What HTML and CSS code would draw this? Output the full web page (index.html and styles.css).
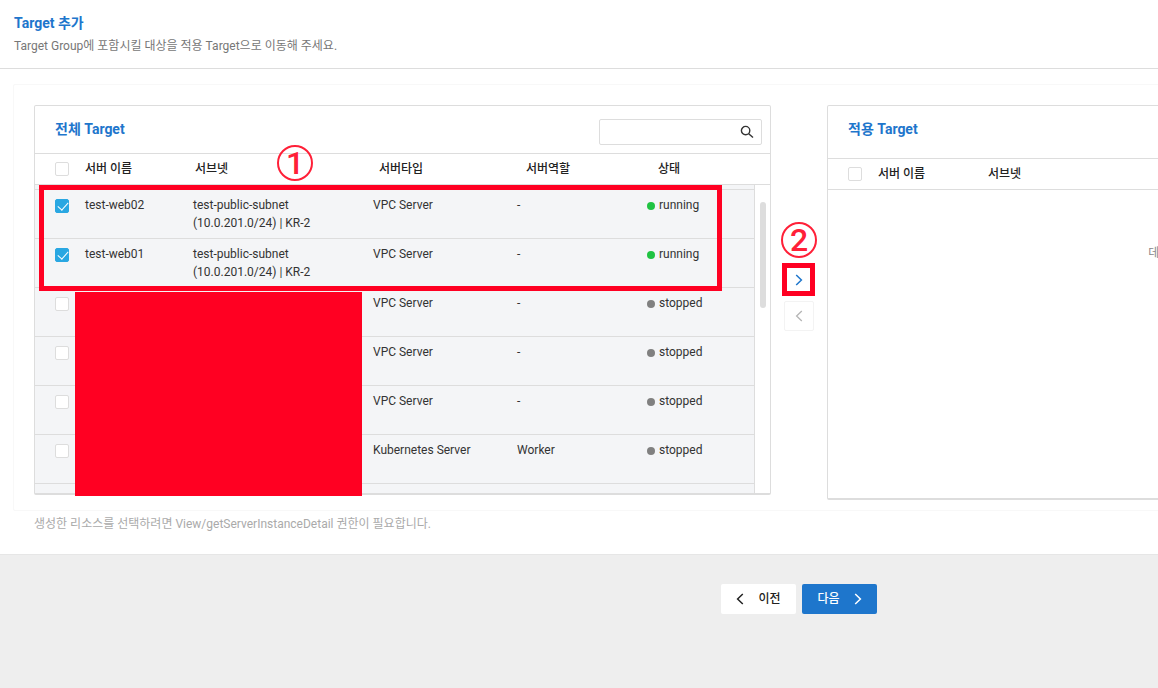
FILE: index.html
```html
<!DOCTYPE html>
<html lang="ko">
<head>
<meta charset="utf-8">
<title>Target 추가</title>
<link rel="stylesheet" href="styles.css">
</head>
<body>
<div class="page">
  <header class="page-header">
    <h1 class="title">Target 추가</h1>
    <p class="description">Target Group에 포함시킬 대상을 적용 Target으로 이동해 주세요.</p>
  </header>

  <main class="content">
    <div class="transfer">
      <section class="panel">
        <div class="panel-bar">
          <h2 class="title">전체 Target</h2>
          <div class="search">
            <input class="search-input" type="text" aria-label="Target 검색">
            <button class="search-button" type="button" aria-label="검색">
              <svg width="14" height="14" viewBox="0 0 14 14" fill="none" stroke="#333" stroke-width="1.4"><circle cx="5.6" cy="5.6" r="4.2"/><path d="M8.7 8.7L13 12.6"/></svg>
            </button>
          </div>
        </div>
        <table class="grid grid-head">
          <colgroup><col class="h-check"><col class="h-name"><col class="h-subnet"><col class="h-type"><col class="h-role"><col></colgroup>
          <thead>
            <tr><th class="check-cell"><input class="check" type="checkbox" aria-label="전체 선택"></th><th>서버 이름</th><th>서브넷</th><th>서버타입</th><th>서버역할</th><th>상태</th></tr>
          </thead>
        </table>
        <div class="rows">
          <div class="rows-view">
            <table class="grid grid-body">
              <colgroup><col class="b-check"><col class="b-name"><col class="b-subnet"><col class="b-type"><col class="b-role"><col></colgroup>
              <tbody>
                <tr><td class="check-cell"><input class="check" type="checkbox" aria-label="test-web02" checked></td><td>test-web02</td><td>test-public-subnet<br>(10.0.201.0/24) | KR-2</td><td>VPC Server</td><td>-</td><td><span class="state running">running</span></td></tr>
                <tr><td class="check-cell"><input class="check" type="checkbox" aria-label="test-web01" checked></td><td>test-web01</td><td>test-public-subnet<br>(10.0.201.0/24) | KR-2</td><td>VPC Server</td><td>-</td><td><span class="state running">running</span></td></tr>
                <tr><td class="check-cell"><input class="check" type="checkbox" aria-label="서버 3"></td><td></td><td></td><td>VPC Server</td><td>-</td><td><span class="state">stopped</span></td></tr>
                <tr><td class="check-cell"><input class="check" type="checkbox" aria-label="서버 4"></td><td></td><td></td><td>VPC Server</td><td>-</td><td><span class="state">stopped</span></td></tr>
                <tr><td class="check-cell"><input class="check" type="checkbox" aria-label="서버 5"></td><td></td><td></td><td>VPC Server</td><td>-</td><td><span class="state">stopped</span></td></tr>
                <tr><td class="check-cell"><input class="check" type="checkbox" aria-label="서버 6"></td><td></td><td></td><td>Kubernetes Server</td><td>Worker</td><td><span class="state">stopped</span></td></tr>
              </tbody>
            </table>
          </div>
          <div class="scroll-track"><div class="scroll-thumb"></div></div>
        </div>
        <div class="mark mark-rows"></div>
        <div class="redaction"></div>
        <span class="step step-one">1</span>
      </section>

      <div class="movers">
        <button class="mover mover-add" type="button" aria-label="추가">
          <svg width="8" height="12" viewBox="0 0 8 12" fill="none" stroke="currentColor" stroke-width="1.5"><path d="M1.2 1L6.4 6L1.2 11"/></svg>
          <span class="mark mark-button"></span>
        </button>
        <button class="mover mover-remove" type="button" aria-label="제거" disabled>
          <svg width="8" height="12" viewBox="0 0 8 12" fill="none" stroke="currentColor" stroke-width="1.3"><path d="M6.8 1L1.6 6L6.8 11"/></svg>
        </button>
        <span class="step step-two">2</span>
      </div>

      <section class="panel">
        <div class="panel-bar panel-bar-tall">
          <h2 class="title">적용 Target</h2>
        </div>
        <table class="grid grid-head">
          <colgroup><col class="h-check"><col class="h-name"><col></colgroup>
          <thead>
            <tr><th class="check-cell"><input class="check" type="checkbox" aria-label="전체 선택"></th><th>서버 이름</th><th>서브넷</th></tr>
          </thead>
        </table>
        <div class="empty">데이터가 없습니다.</div>
      </section>
    </div>
    <p class="note">생성한 리소스를 선택하려면 View/getServerInstanceDetail 권한이 필요합니다.</p>
  </main>

  <footer class="actions">
    <button class="action" type="button">
      <svg width="8" height="12" viewBox="0 0 8 12" fill="none" stroke="currentColor" stroke-width="1.5"><path d="M6.8 1L1.6 6L6.8 11"/></svg>
      이전
    </button>
    <button class="action action-primary" type="button">
      다음
      <svg width="8" height="12" viewBox="0 0 8 12" fill="none" stroke="currentColor" stroke-width="1.5"><path d="M1.2 1L6.4 6L1.2 11"/></svg>
    </button>
  </footer>
</div>
</body>
</html>
```

FILE: styles.css
```css
* { box-sizing: border-box; }

html { overflow: hidden; }

body {
  margin: 0;
  background: #eee;
  color: #333;
  font: 12px/18px Roboto, "Noto Sans CJK KR", sans-serif;
}

h1, h2, p { margin: 0; }

button, input { font: inherit; }

button { cursor: pointer; }

svg { display: block; }

/* The two target lists need this much room side by side. */
.page {
  display: flex;
  flex-direction: column;
  min-width: 1598px;
  min-height: 100vh;
}

.page-header {
  padding: 14px 14px 13px;
  border-bottom: 1px solid #ddd;
  background: #fff;
}

.title {
  color: #1e76cc;
  font-size: 14px;
  font-weight: 700;
  line-height: 18px;
}

.description {
  margin-top: 5px;
  color: #777;
}

.content {
  padding: 15px 13px 21px;
  border-bottom: 1px solid #e6e6e6;
  background: #fff;
}

.transfer {
  display: grid;
  grid-template-columns: minmax(0, 1fr) 56px minmax(0, 1fr);
  align-items: start;
  padding: 20px 20px 10px;
  border: 1px solid #f8f8f8;
  border-radius: 2px;
}

.panel {
  position: relative;
  border: 1px solid #ddd;
  border-bottom-width: 2px;
  border-radius: 2px;
}

.panel-bar {
  display: flex;
  align-items: flex-start;
  justify-content: space-between;
  min-height: 48px;
  padding: 14px 8px 0 20px;
  border-bottom: 1px solid #ddd;
}

.panel-bar-tall { min-height: 53px; }

.search {
  display: flex;
  width: 163px;
  height: 26px;
  margin-top: -1px;
  border: 1px solid #ddd;
  border-radius: 2px;
}

.search-input {
  flex: 1;
  min-width: 0;
  padding: 0 8px;
  border: 0;
  background: none;
}

.search-button {
  padding: 0 7px;
  border: 0;
  background: none;
}

.grid {
  width: 100%;
  border-collapse: separate;
  border-spacing: 0;
  table-layout: fixed;
}

.grid th,
.grid td {
  padding: 0;
  text-align: left;
  vertical-align: top;
}

.grid th {
  height: 31px;
  padding-top: 6px;
  border-bottom: 1px solid #ddd;
  color: #222;
  font-weight: 500;
}

.grid td {
  height: 49px;
  padding-top: 6px;
  border-bottom: 1px solid #ddd;
}

.grid .check-cell { padding: 8px 0 0 20px; }
.grid-body .check-cell { padding-top: 9px; }

.h-check, .b-check { width: 50px; }
.h-name { width: 110px; }
.h-subnet { width: 184px; }
.h-type { width: 147px; }
.h-role { width: 132px; }
.b-name { width: 108px; }
.b-subnet { width: 180px; }
.b-type { width: 144px; }
.b-role { width: 130px; }

.check {
  display: block;
  position: relative;
  width: 14px;
  height: 14px;
  margin: 0;
  border: 1px solid #ddd;
  border-radius: 2px;
  background: #fff;
  appearance: none;
}

.check:checked {
  border-color: #29a7e2;
  background: #29a7e2;
}

.check:checked::after {
  content: "";
  position: absolute;
  top: 0;
  left: 4px;
  width: 5px;
  height: 9px;
  border: solid #fff;
  border-width: 0 1px 1px 0;
  transform: rotate(42deg);
}

.rows {
  display: flex;
  height: 308px;
  overflow: hidden;
}

.rows-view {
  flex: 1;
  padding-top: 4px;
  border-right: 1px solid #ddd;
  background: #f4f5f7;
}

.grid-body { border-top: 1px solid #ddd; }

.scroll-track {
  width: 15px;
  padding: 17px 4px 0 5px;
}

.scroll-thumb {
  height: 106px;
  border-radius: 3px;
  background: #ddd;
}

.state {
  display: flex;
  align-items: center;
  gap: 4px;
}

.state::before {
  content: "";
  width: 8px;
  height: 8px;
  margin-top: 2px;
  border-radius: 50%;
  background: #808080;
}

.running::before { background: #20c343; }

.empty {
  height: 308px;
  padding-top: 54px;
  color: #888;
  text-align: center;
}

.movers {
  position: relative;
  display: flex;
  flex-direction: column;
  align-items: center;
  gap: 6px;
  padding-top: 160px;
}

.mover {
  position: relative;
  display: grid;
  place-items: center;
  width: 30px;
  height: 30px;
  padding: 0;
  border: 1px solid #f3f3f3;
  border-radius: 2px;
  background: #fff;
}

.mover-add { color: #1e76cc; }
.mover-remove { color: #b5b5b5; }

/* Guide annotations laid over the lists */
.mark {
  position: absolute;
  border: 5px solid #ff0022;
}

.mark-rows {
  top: 79px;
  left: 4px;
  width: 683px;
  height: 106px;
}

.mark-button { inset: -3px -2px -2px -3px; }

.redaction {
  position: absolute;
  top: 186px;
  left: 40px;
  width: 287px;
  height: 204px;
  background: #ff0022;
}

.step {
  position: absolute;
  width: 36px;
  height: 36px;
  border: 2px solid #ff2038;
  border-radius: 50%;
  color: #ff2038;
  font-size: 32px;
  font-weight: 500;
  line-height: 32px;
  text-align: center;
}

.step-one {
  top: 39px;
  left: 242px;
}

.step-two {
  top: 117px;
  left: 10px;
}

.note {
  margin-top: 4px;
  padding: 0 21px;
  color: #aaa;
}

.actions {
  display: flex;
  justify-content: center;
  gap: 6px;
  padding: 29px 0;
}

.action {
  display: flex;
  align-items: center;
  justify-content: center;
  gap: 14px;
  width: 75px;
  height: 30px;
  padding: 0;
  border: 0;
  border-radius: 2px;
  background: #fff;
  color: #222;
  font-weight: 500;
}

.action-primary {
  background: #1e76cc;
  color: #fff;
}
```
